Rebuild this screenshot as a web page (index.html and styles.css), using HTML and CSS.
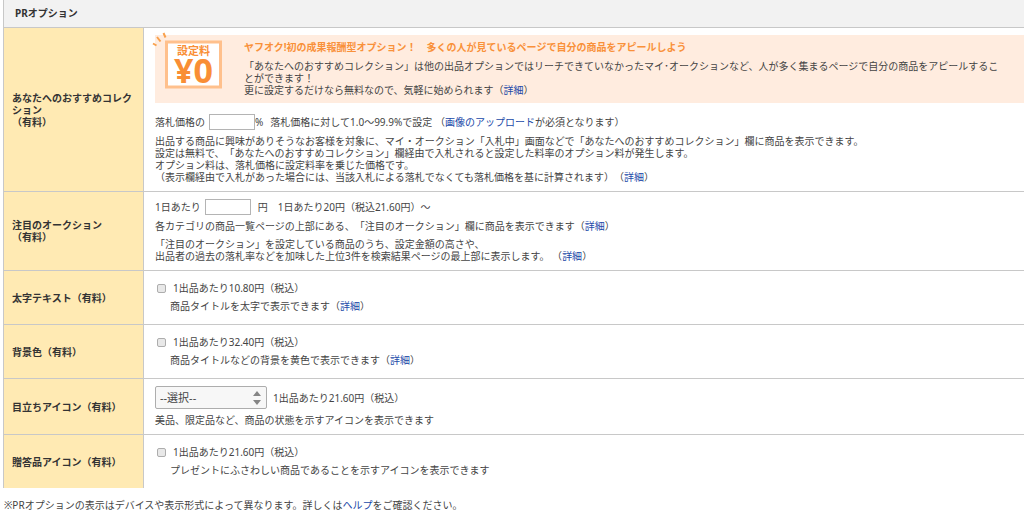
FILE: index.html
```html
<!DOCTYPE html>
<html lang="ja">
<head>
  <meta charset="UTF-8">
  <meta name="viewport" content="width=device-width, initial-scale=1.0">
  <title>PRオプション</title>
  <link rel="stylesheet" href="styles.css">
</head>
<body>
  <form class="pr-form">
    <table class="option-table">
      <thead>
        <tr>
          <th class="table-title" colspan="2">PRオプション</th>
        </tr>
      </thead>
      <tbody>
        <tr>
          <th scope="row"><label for="rate">あなたへのおすすめコレクション<br>（有料）</label></th>
          <td>
            <div class="banner">
              <svg class="banner-icon" viewBox="0 0 80 68" role="img" aria-label="設定料 ¥0">
                <path d="M-2 8.5L1.5 10.5M2 2L5.5 6.5M8.5 -2L10.5 2.5" stroke="#f9a14d" stroke-width="2" fill="none"/>
                <rect x="11.5" y="7" width="54" height="45" fill="#fff" stroke="#ffc08c" stroke-width="3"/>
                <text class="icon-label" x="38.5" y="20" text-anchor="middle">設定料</text>
                <text class="icon-price" x="38.5" y="48" text-anchor="middle">¥0</text>
              </svg>
              <div class="banner-body">
                <h2>ヤフオク!初の成果報酬型オプション！　多くの人が見ているページで自分の商品をアピールしよう</h2>
                <p>「あなたへのおすすめコレクション」は他の出品オプションではリーチできていなかったマイ･オークションなど、人が多く集まるページで自分の商品をアピールすることができます！<br>更に設定するだけなら無料なので、気軽に始められます（<a href="#">詳細</a>）</p>
              </div>
            </div>
            <div class="field">
              <span>落札価格の</span>
              <input type="text" id="rate" class="text-box">
              <span class="unit">%</span>
              <span class="note">落札価格に対して1.0～99.9%で設定 （<a href="#">画像のアップロード</a>が必須となります）</span>
            </div>
            <p>出品する商品に興味がありそうなお客様を対象に、マイ・オークション「入札中」画面などで「あなたへのおすすめコレクション」欄に商品を表示できます。<br>
            設定は無料で、「あなたへのおすすめコレクション」欄経由で入札されると設定した料率のオプション料が発生します。<br>
            オプション料は、落札価格に設定料率を乗じた価格です。<br>
            （表示欄経由で入札があった場合には、当該入札による落札でなくても落札価格を基に計算されます）（<a href="#">詳細</a>）</p>
          </td>
        </tr>
        <tr>
          <th scope="row"><label for="price">注目のオークション<br>（有料）</label></th>
          <td>
            <div class="field">
              <span>1日あたり</span>
              <input type="text" id="price" class="text-box">
              <span class="note">円　1日あたり20円（税込21.60円）～</span>
            </div>
            <p>各カテゴリの商品一覧ページの上部にある、「注目のオークション」欄に商品を表示できます（<a href="#">詳細</a>）</p>
            <p>「注目のオークション」を設定している商品のうち、設定金額の高さや、<br>
            出品者の過去の落札率などを加味した上位3件を検索結果ページの最上部に表示します。 （<a href="#">詳細</a>）</p>
          </td>
        </tr>
        <tr>
          <th scope="row">太字テキスト（有料）</th>
          <td>
            <label class="check"><input type="checkbox" name="bold">1出品あたり10.80円（税込）</label>
            <p class="check-note">商品タイトルを太字で表示できます（<a href="#">詳細</a>）</p>
          </td>
        </tr>
        <tr>
          <th scope="row">背景色（有料）</th>
          <td>
            <label class="check"><input type="checkbox" name="background">1出品あたり32.40円（税込）</label>
            <p class="check-note">商品タイトルなどの背景を黄色で表示できます（<a href="#">詳細</a>）</p>
          </td>
        </tr>
        <tr>
          <th scope="row"><label for="icon">目立ちアイコン（有料）</label></th>
          <td>
            <div class="field">
              <span class="select-wrap">
                <select id="icon">
                  <option>--選択--</option>
                </select>
                <svg class="arrows" viewBox="0 0 8 14" aria-hidden="true">
                  <path d="M4 0L8 5H0ZM0 9H8L4 14Z" fill="#858585"/>
                </svg>
              </span>
              <span>1出品あたり21.60円（税込）</span>
            </div>
            <p>美品、限定品など、商品の状態を示すアイコンを表示できます</p>
          </td>
        </tr>
        <tr>
          <th scope="row">贈答品アイコン（有料）</th>
          <td>
            <label class="check"><input type="checkbox" name="gift">1出品あたり21.60円（税込）</label>
            <p class="check-note">プレゼントにふさわしい商品であることを示すアイコンを表示できます</p>
          </td>
        </tr>
      </tbody>
    </table>
    <p class="footnote">※PRオプションの表示はデバイスや表示形式によって異なります。詳しくは<a href="#">ヘルプ</a>をご確認ください。</p>
  </form>
</body>
</html>
```
FILE: styles.css
```css
body {
  margin: 0;
  background-color: #fff;
  color: #444;
  font-family: "Noto Sans", "Noto Sans CJK JP", sans-serif;
  font-size: 10px;
  line-height: 12px;
  text-spacing-trim: space-all;
}

a {
  color: #2149a8;
  text-decoration: none;
}

p {
  margin: 0;
}

.pr-form {
  padding-left: 3px;
}

/* Option table */
.option-table {
  width: 100%;
  border-collapse: collapse;
  border-left: 1px solid #c8c8c8;
}

.option-table tbody tr {
  border-top: 1px solid #c8c8c8;
}

.option-table th {
  width: 123px;
  padding: 8px;
  background-color: #ffeab3;
  border-right: 1px solid #c8c8c8;
  text-align: left;
  vertical-align: middle;
  color: #333;
  font-weight: bold;
}

.option-table .table-title {
  padding: 7px 11px 8px;
  background-color: #f2f2f2;
  border-right: none;
}

.option-table td {
  padding: 7px 0 8px 11px;
  vertical-align: top;
}

td p + p {
  margin-top: 6px;
}

/* Banner */
.banner {
  display: flex;
  margin-bottom: 11px;
  background-color: #ffecdf;
}

.banner-icon {
  flex: none;
  width: 80px;
  height: 68px;
  margin-right: 9px;
  overflow: visible;
}

.icon-label,
.icon-price {
  fill: #f98e35;
  font-weight: bold;
}

.icon-label {
  font-size: 11px;
}

.icon-price {
  font-size: 34px;
}

.banner-body {
  padding: 6px 24px 0 0;
}

.banner-body h2 {
  margin: 0 0 7px;
  color: #f9913a;
  font-size: 10px;
  line-height: 12px;
}

/* Inputs */
.field {
  display: flex;
  align-items: center;
  margin-bottom: 5px;
}

.text-box {
  box-sizing: border-box;
  width: 46px;
  height: 16px;
  margin: 0 0 0 4px;
  padding: 0 2px;
  border: 1px solid #b4b4b4;
  background-color: #fff;
  font: inherit;
}

.note {
  margin-left: 7px;
}

.check {
  display: flex;
  align-items: center;
  margin: 4px 0 6px 2px;
}

.check input {
  appearance: none;
  box-sizing: border-box;
  width: 9px;
  height: 9px;
  margin: 0 7px 0 0;
  border: 1px solid #adadad;
  border-radius: 2px;
  background-color: #e8e8e8;
}

.check input:checked {
  background-color: #2149a8;
}

.check-note {
  margin: 0 0 4px 15px;
}

.select-wrap {
  position: relative;
  margin-right: 6px;
}

.select-wrap select {
  appearance: none;
  display: block;
  box-sizing: border-box;
  width: 112px;
  height: 23px;
  padding: 0 20px 0 4px;
  border: 1px solid #adadad;
  border-radius: 2px;
  background-color: #f7f7f7;
  color: #444;
  font: inherit;
  font-size: 11px;
}

.arrows {
  position: absolute;
  top: 5px;
  right: 6px;
  width: 8px;
  height: 14px;
  pointer-events: none;
}

.footnote {
  margin: 11px 0 0 1px;
}
```
